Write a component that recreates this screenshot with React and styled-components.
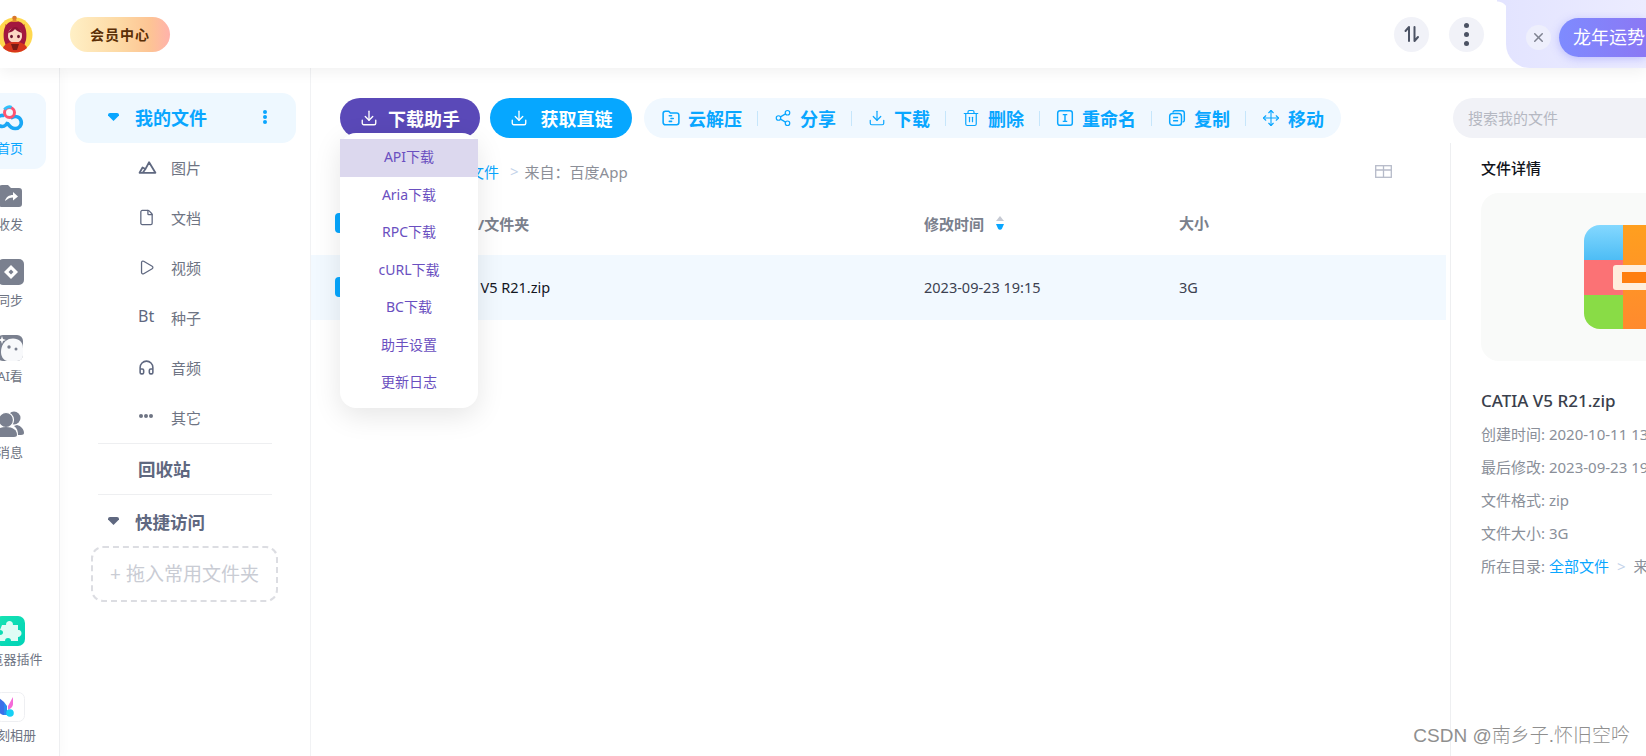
import React from 'react';
import styled, { createGlobalStyle } from 'styled-components';
import { Download, Share2, Trash2, Move, File, Play, Headphones, X } from 'lucide-react';

const helperMenu = ['API下载', 'Aria下载', 'RPC下载', 'cURL下载', 'BC下载', '助手设置', '更新日志'];

const details = [
  ['创建时间:', '2020-10-11 13:24:08'],
  ['最后修改:', '2023-09-23 19:15:32'],
  ['文件格式:', 'zip'],
  ['文件大小:', '3G'],
];

export default function App() {
  return (
    <Page>
      <GlobalStyle />
      <Header>
        <Avatar />
        <VipPill>会员中心</VipPill>
        <HeaderRight>
          <RoundButton><SortIcon /></RoundButton>
          <RoundButton><VerticalDots $color="#4c5364" $size={5} $gap={4} /></RoundButton>
        </HeaderRight>
        <Promo>
          <PromoClose><X size={15} strokeWidth={2.4} /></PromoClose>
          <PromoButton>龙年运势</PromoButton>
        </Promo>
      </Header>

      <Body>
        <Rail>
          {railTop.map((item) => (
            <RailItem key={item.label} $active={item.active}>
              <RailIcon>{item.icon}</RailIcon>
              {item.label}
            </RailItem>
          ))}
          <RailSpacer />
          <RailItem>
            <RailIcon><PluginIcon /></RailIcon>
            浏览器插件
          </RailItem>
          <RailItem>
            <RailIcon><AlbumIcon /></RailIcon>
            一刻相册
          </RailItem>
        </Rail>

        <Sidebar>
          <MyFiles>
            <Caret $color="#09a6ff" />
            <MyFilesLabel>我的文件</MyFilesLabel>
            <VerticalDots $color="#09a6ff" $size={4} $gap={1} />
          </MyFiles>
          {fileTypes.map((t) => (
            <TypeRow key={t.label}>
              <TypeIcon>{t.icon}</TypeIcon>
              {t.label}
            </TypeRow>
          ))}
          <SideDivider />
          <RecycleRow>回收站</RecycleRow>
          <SideDivider />
          <QuickRow>
            <Caret $color="#5f6880" />
            快捷访问
          </QuickRow>
          <DropBox>+ 拖入常用文件夹</DropBox>
        </Sidebar>

        <Main>
          <TopBar>
            <HelperWrap>
              <PrimaryButton $bg="#5a49b8" $width={140} $gap={10}>
                <Download size={18} strokeWidth={1.8} />
                下载助手
              </PrimaryButton>
              <HelperMenu>
                {helperMenu.map((m, i) => (
                  <HelperItem key={m} $active={i === 0}>{m}</HelperItem>
                ))}
              </HelperMenu>
            </HelperWrap>
            <PrimaryButton $bg="#06a7ff" $width={142} $gap={13}>
              <Download size={18} strokeWidth={1.8} />
              获取直链
            </PrimaryButton>
            <ActionBar>
              {actions.map((a, i) => (
                <React.Fragment key={a.label}>
                  {i > 0 && <ActionSep />}
                  <Action>{a.icon}{a.label}</Action>
                </React.Fragment>
              ))}
            </ActionBar>
            <Search>搜索我的文件</Search>
          </TopBar>

          <Content>
            <Files>
              <Crumbs>
                <CrumbLink>全部文件</CrumbLink>
                <CrumbArrow>&gt;</CrumbArrow>
                来自：百度App
                <ViewToggle />
              </Crumbs>
              <TableHead>
                <NameCell><CheckBox /><HeadName>文件名/文件夹</HeadName></NameCell>
                <TimeCell>
                  <HeadText>修改时间</HeadText>
                  <SortArrows />
                </TimeCell>
                <SizeCell><HeadText>大小</HeadText></SizeCell>
              </TableHead>
              <TableRow>
                <NameCell><CheckBox /><FileName>CATIA V5 R21.zip</FileName></NameCell>
                <TimeCell>2023-09-23 19:15</TimeCell>
                <SizeCell>3G</SizeCell>
              </TableRow>
            </Files>

            <Details>
              <DetailsTitle>文件详情</DetailsTitle>
              <Preview><ZipArt /></Preview>
              <DetailName>CATIA V5 R21.zip</DetailName>
              {details.map(([k, v]) => (
                <DetailLine key={k}>{k} {v}</DetailLine>
              ))}
              <DetailLine>
                所在目录: <CrumbLink>全部文件</CrumbLink><DetailArrow>&gt;</DetailArrow>来自：百度App
              </DetailLine>
            </Details>
          </Content>
        </Main>
      </Body>
      <Watermark>CSDN @南乡子.怀旧空吟</Watermark>
    </Page>
  );
}

function Avatar() {
  return (
    <AvatarSvg viewBox="0 0 36 38" width="36" height="38">
      <circle cx="18" cy="20" r="17.5" fill="#ffd84f" />
      <path d="M8 9l4 2-3 5zM28 9l-4 2 3 5z" fill="#d9772b" />
      <path d="M7 25C5 11 11 6 18 6s13 5 11 19l-2 6H9z" fill="#a3173f" />
      <circle cx="17.500" cy="3" r="2.300" fill="#d9772b" />
      <path d="M13.500 7l4-3 4 3z" fill="#e0872f" />
      <path d="M11 21c0-6 3-8 7-8s7 2 7 8c0 4-3 7-7 7s-7-3-7-7z" fill="#fbd6c4" />
      <path d="M11 18c2-4 5-6 7-6s6 2 7 6c-4-1-6-3-7-4-1 2-4 3-7 4z" fill="#8e1236" />
      <ellipse cx="14.500" cy="21.500" rx="1.400" ry="1.800" fill="#6b1530" />
      <ellipse cx="21.500" cy="21.500" rx="1.400" ry="1.800" fill="#6b1530" />
      <path d="M6 33c2-5 7-6 12-6s10 1 12 6c-3 3-8 4.500-12 4.500S9 36 6 33z" fill="#d8361d" />
      <path d="M14 29h8l-2 6h-4z" fill="#7a1a14" />
    </AvatarSvg>
  );
}

function HomeLogo() {
  return (
    <svg viewBox="0 0 30 30" width="30" height="30" fill="none">
      <path d="M12 18.500a5.500 5.500 0 1 1-4-8" stroke="#1aa7f5" strokeWidth="3.600" strokeLinecap="round" />
      <path d="M13 19c2 3 4 4.500 7 4.500a6 6 0 1 0-3-11" stroke="#1aa7f5" strokeWidth="3.600" strokeLinecap="round" />
      <circle cx="14.500" cy="7.500" r="5" stroke="#ff5470" strokeWidth="3" />
      <path d="M9.500 4.500a5.500 5.500 0 0 1 7-2.200" stroke="#2fc1fb" strokeWidth="3" />
    </svg>
  );
}

function ShareFolder() {
  return (
    <svg viewBox="0 0 30 30" width="30" height="30">
      <path d="M4 7a3 3 0 0 1 3-3h6l3 3h8a3 3 0 0 1 3 3v13a3 3 0 0 1-3 3H7a3 3 0 0 1-3-3z" fill="#7a808f" />
      <path d="M10 20c1-4 4-6 8-6v-3l5 4.500-5 4v-3c-3 0-5 1-8 3.500z" fill="#fff" />
    </svg>
  );
}

function SyncIcon() {
  return (
    <svg viewBox="0 0 30 30" width="30" height="30">
      <rect x="3" y="2" width="26" height="26" rx="5" fill="#7a808f" />
      <path d="M16 8l7 7-7 7-7-7z" fill="#fff" />
      <path d="M16 12.500l2.500 2.500-2.500 2.500-2.500-2.500z" fill="#7a808f" />
    </svg>
  );
}

function AiIcon() {
  return (
    <svg viewBox="0 0 30 30" width="30" height="30">
      <rect x="2" y="2" width="26" height="26" rx="6" fill="#7a808f" />
      <path d="M14 6c8-2 14 2 14 9v7c0 3-2 6-6 6H12c-4-1-6-5-6-9 0-6 3-11 8-13z" fill="#f8f9fb" />
      <path d="M7 3l1 3 3 1-3 1-1 3-1-3-3-1 3-1z" fill="#fff" />
      <circle cx="14" cy="14" r="1.700" fill="#7a808f" />
      <circle cx="21" cy="16" r="1.500" fill="#7a808f" />
    </svg>
  );
}

function PeopleIcon() {
  return (
    <svg viewBox="0 0 30 30" width="30" height="30">
      <circle cx="19" cy="9" r="6.500" fill="#7a808f" />
      <path d="M22 16c4 1 7 4 7 8 0 1-1 2-3 2h-3c0-4-1-7-4-9z" fill="#7a808f" />
      <circle cx="11" cy="11" r="7.500" fill="#7a808f" stroke="#fff" strokeWidth="1.200" />
      <path d="M0 26c0-5 4-8 11-8s11 3 11 8c0 1-1 2-3 2H3c-2 0-3-1-3-2z" fill="#7a808f" />
    </svg>
  );
}

function PluginIcon() {
  return (
    <svg viewBox="0 0 30 30" width="30" height="30">
      <defs>
        <linearGradient id="plug" x1="0" y1="0" x2="1" y2="1">
          <stop offset="0" stopColor="#18e3b1" />
          <stop offset="1" stopColor="#00d3b8" />
        </linearGradient>
      </defs>
      <rect x="0" y="0" width="30" height="30" rx="7" fill="url(#plug)" />
      <path d="M7 9h4c0-3 1.500-4 3.500-4S18 6 18 9h5v5c3 0 3.500 2 3.500 3.500S25 21 23 21v4H16c0-2-1-3-3-3s-3 1-3 3H5v-6c2 0 3-1 3-2.500S7 14 5 14z" fill="#dffcf5" />
    </svg>
  );
}

function AlbumIcon() {
  return (
    <svg viewBox="0 0 30 30" width="30" height="30">
      <rect x="0.500" y="0.500" width="29" height="29" rx="6" fill="#fff" stroke="#eeeff2" />
      <path d="M3 5l6 5v13c-3 0-6-3-6-7z" fill="#3b6fe8" />
      <path d="M9 10l3 4v9l-3 0z" fill="#2a8bf0" />
      <path d="M18 5v7c0 3-3 5-5 6v-4z" fill="#f56ad8" />
      <circle cx="15" cy="21" r="3.800" fill="#16d0f5" />
    </svg>
  );
}

function MountainIcon() {
  return (
    <svg viewBox="0 0 18 18" width="19" height="19" fill="none" stroke="currentColor" strokeWidth="1.700" strokeLinejoin="round">
      <path d="M1.500 14l2.800-5 2.700 1.500L10.500 4l6 10z" />
      <path d="M4.500 14l2.500-3.500" />
    </svg>
  );
}

function ZipFolderIcon() {
  return (
    <svg viewBox="0 0 16 16" width="18" height="18" fill="none" stroke="currentColor" strokeWidth="1.400">
      <path d="M1 4a2 2 0 0 1 2-2h3l1.500 1.500H13a2 2 0 0 1 2 2V12a2 2 0 0 1-2 2H3a2 2 0 0 1-2-2z" />
      <path d="M6.500 6h2M8 8.500h2M6.500 11h2" strokeLinecap="round" />
    </svg>
  );
}

function RenameIcon() {
  return (
    <svg viewBox="0 0 16 16" width="18" height="18" fill="none" stroke="currentColor" strokeWidth="1.300">
      <rect x="1.500" y="1.500" width="13" height="13" rx="2" />
      <path d="M6 5h4M8 5v6M6 11h4" />
    </svg>
  );
}

function CopyIcon() {
  return (
    <svg viewBox="0 0 16 16" width="18" height="18" fill="none" stroke="currentColor" strokeWidth="1.300">
      <path d="M4.500 3V3a1.500 1.500 0 0 1 1.500-1.500h6.500A2 2 0 0 1 14.500 3.500V10a1.500 1.500 0 0 1-1.500 1.500" />
      <rect x="1.500" y="4" width="10.500" height="10.500" rx="2.500" />
      <path d="M4.500 7.500h4.500M4.500 10.500h4.500" />
    </svg>
  );
}

function SortIcon() {
  return (
    <svg viewBox="0 0 20 20" width="20" height="20" fill="none" stroke="#4c5364" strokeWidth="2" strokeLinecap="round" strokeLinejoin="round">
      <path d="M7 17V3L3.500 7" />
      <path d="M12.500 3v14l3.500-4" />
    </svg>
  );
}

function ViewToggle() {
  return (
    <ViewSvg viewBox="0 0 17 13" width="17" height="13" fill="none" stroke="#b6bbc9" strokeWidth="1.300">
      <rect x="0.700" y="0.700" width="15.600" height="11.600" />
      <path d="M0.700 5h15.600M8.500 0.700v11.600" />
    </ViewSvg>
  );
}

function SortArrows() {
  return (
    <svg viewBox="0 0 10 14" width="10" height="14">
      <path d="M5 0l4 5H1z" fill="#c5c9d3" />
      <path d="M1 8h8l-2 4.500a2.200 2.200 0 0 1-4 0z" fill="#09a6ff" />
    </svg>
  );
}

function ZipArt() {
  return (
    <ZipSvg viewBox="0 0 104 104" width="104" height="104">
      <defs>
        <linearGradient id="zipBlue" x1="0" y1="0" x2="0" y2="1">
          <stop offset="0" stopColor="#84d8ff" />
          <stop offset="1" stopColor="#4dbdf5" />
        </linearGradient>
        <linearGradient id="zipOrange" x1="0" y1="0" x2="0" y2="1">
          <stop offset="0" stopColor="#ff9f1f" />
          <stop offset="1" stopColor="#ff8a2e" />
        </linearGradient>
        <clipPath id="zipClip"><rect width="104" height="104" rx="16" /></clipPath>
      </defs>
      <g clipPath="url(#zipClip)">
        <rect width="39" height="35" fill="url(#zipBlue)" />
        <rect y="35" width="39" height="35" fill="#fb7275" />
        <rect y="70" width="39" height="34" fill="#89dc46" />
        <rect x="39" width="65" height="104" fill="url(#zipOrange)" />
        <rect x="29" y="40" width="52" height="25" rx="3" fill="#ffeedd" />
        <rect x="38" y="47" width="40" height="11" fill="#ff7f10" />
      </g>
    </ZipSvg>
  );
}

const GlobalStyle = createGlobalStyle`
  html, body {
    margin: 0;
    padding: 0;
    background: #fff;
    overflow: hidden;
  }
  * {
    box-sizing: border-box;
  }
`;

const Page = styled.div`
  position: relative;
  width: 1646px;
  height: 756px;
  overflow: hidden;
  font-family: "Noto Sans", "Noto Sans CJK SC", sans-serif;
`;

const Header = styled.header`
  position: relative;
  z-index: 2;
  display: flex;
  align-items: center;
  height: 68px;
  background: #fff;
  box-shadow: 0 4px 14px rgba(0, 0, 0, 0.06);
`;

const AvatarSvg = styled.svg`
  flex: none;
  margin-left: -3px;
`;

const VipPill = styled.div`
  display: flex;
  align-items: center;
  justify-content: center;
  width: 100px;
  height: 35px;
  margin-left: 37px;
  border-radius: 18px;
  background: linear-gradient(90deg, #fff0c6 0%, #fdd9a4 50%, #fdc494 80%, #ffb2ab 100%);
  color: #5a2e05;
  font-size: 14px;
  font-weight: 700;
  letter-spacing: 1px;
`;

const HeaderRight = styled.div`
  display: flex;
  gap: 20px;
  margin-left: auto;
  margin-right: 22px;
`;

const RoundButton = styled.div`
  display: flex;
  align-items: center;
  justify-content: center;
  width: 35px;
  height: 35px;
  border-radius: 50%;
  background: #f1f2f8;
`;

const VerticalDots = styled.span`
  width: ${(p) => p.$size}px;
  height: ${(p) => p.$size}px;
  border-radius: 50%;
  background: ${(p) => p.$color};
  box-shadow: 0 ${(p) => p.$size + p.$gap}px 0 ${(p) => p.$color}, 0 -${(p) => p.$size + p.$gap}px 0 ${(p) => p.$color};
`;

const Promo = styled.div`
  position: relative;
  display: flex;
  align-items: center;
  flex: none;
  width: 140px;
  height: 68px;
  padding: 6px 0 0 20px;
  border-radius: 0 0 0 24px;
  background: linear-gradient(90deg, #e3e4ff, #ececff);

  &:before {
    content: "";
    position: absolute;
    top: 0;
    left: -9px;
    width: 9px;
    height: 13px;
    background: radial-gradient(circle at 0 100%, transparent 11px, #e3e4ff 12px);
  }
`;

const PromoClose = styled.div`
  display: flex;
  flex: none;
  align-items: center;
  justify-content: center;
  width: 25px;
  height: 25px;
  border-radius: 50%;
  background: #eeeffc;
  color: #7f8290;
`;

const PromoButton = styled.div`
  flex: none;
  width: 87px;
  height: 39px;
  margin-left: 8px;
  padding-left: 14px;
  border-radius: 20px 0 0 20px;
  background: linear-gradient(90deg, #7e8bff, #8b78f4);
  box-shadow: 0 2px 10px rgba(110, 110, 250, 0.35);
  color: #fff;
  font-size: 18px;
  line-height: 39px;
  white-space: nowrap;
`;

const Body = styled.div`
  display: flex;
  height: 688px;
`;

const Rail = styled.nav`
  display: flex;
  flex: none;
  flex-direction: column;
  align-items: flex-end;
  width: 60px;
  padding: 25px 13px 0 0;
  overflow: hidden;
  border-right: 1px solid #eeeff1;
  box-shadow: 4px 0 10px rgba(0, 0, 0, 0.02);
`;

const RailItem = styled.div`
  display: flex;
  flex: none;
  flex-direction: column;
  align-items: center;
  width: 72px;
  height: 76px;
  padding-top: 12px;
  border-radius: 12px;
  background: ${(p) => (p.$active ? '#f0f8ff' : 'transparent')};
  color: ${(p) => (p.$active ? '#09a6ff' : '#6e7483')};
  font-size: 13px;
  line-height: 18px;
  white-space: nowrap;
`;

const RailIcon = styled.div`
  display: flex;
  justify-content: center;
  height: 31px;
  margin-bottom: 3px;
`;

const RailSpacer = styled.div`
  flex: 1;
`;

const Sidebar = styled.aside`
  flex: none;
  width: 250px;
  padding-top: 25px;
`;

const MyFiles = styled.div`
  display: flex;
  align-items: center;
  width: 221px;
  height: 50px;
  margin-left: 15px;
  padding: 0 29px 2px 33px;
  border-radius: 14px;
  background: #eef8ff;
`;

const Caret = styled.span`
  flex: none;
  width: 11px;
  height: 8px;
  margin-right: 16px;
  background: ${(p) => p.$color};
  clip-path: polygon(0 0, 100% 0, 100% 30%, 50% 100%, 0 30%);
  border-radius: 2px;
`;

const MyFilesLabel = styled.span`
  flex: 1;
  color: #09a6ff;
  font-size: 18px;
  font-weight: 700;
`;

const TypeRow = styled.div`
  display: flex;
  align-items: center;
  height: 50px;
  padding: 0 0 2px 78px;
  color: #6e7483;
  font-size: 15px;
`;

const TypeIcon = styled.div`
  display: flex;
  align-items: center;
  width: 33px;
  color: #5f6880;
`;

const BtMark = styled.span`
  font-size: 16px;
  font-weight: 400;
  margin-top: -2px;
`;

const DotsMark = styled.span`
  width: 4px;
  height: 4px;
  margin: -2px 0 0 1px;
  border-radius: 50%;
  background: #6e7483;
  box-shadow: 5px 0 0 #6e7483, 10px 0 0 #6e7483;
`;

const SideDivider = styled.div`
  width: 174px;
  height: 1px;
  margin-left: 38px;
  background: #eeeff1;
`;

const RecycleRow = styled.div`
  display: flex;
  align-items: center;
  height: 50px;
  padding: 0 0 2px 78px;
  color: #5f6880;
  font-size: 17.5px;
  font-weight: 700;
`;

const QuickRow = styled.div`
  display: flex;
  align-items: center;
  height: 50px;
  padding: 2px 0 0 48px;
  color: #5f6880;
  font-size: 17.5px;
  font-weight: 700;
`;

const DropBox = styled.div`
  display: flex;
  align-items: center;
  justify-content: center;
  width: 187px;
  height: 56px;
  margin: 1px 0 0 31px;
  padding-bottom: 2px;
  border: 2px dashed #dcdde2;
  border-radius: 12px;
  color: #c9ccd4;
  font-size: 19px;
`;

const Main = styled.main`
  flex: 1;
  min-width: 0;
  overflow: hidden;
  border-left: 1px solid #f1f2f4;
`;

const TopBar = styled.div`
  display: flex;
  height: 40px;
  margin-top: 30px;
  padding-left: 29px;
`;

const HelperWrap = styled.div`
  position: relative;
  flex: none;
`;

const PrimaryButton = styled.div`
  display: flex;
  align-items: center;
  justify-content: center;
  gap: ${(p) => p.$gap}px;
  flex: none;
  width: ${(p) => p.$width}px;
  height: 40px;
  margin-right: 10px;
  border-radius: 20px;
  background: ${(p) => p.$bg};
  color: #fff;
  font-size: 18px;
  font-weight: 700;
`;

const HelperMenu = styled.div`
  position: absolute;
  z-index: 3;
  top: 35px;
  left: 0;
  width: 138px;
  height: 275px;
  padding-top: 6px;
  border-radius: 16px;
  background: #fff;
  box-shadow: 0 8px 28px rgba(0, 0, 0, 0.1);
`;

const HelperItem = styled.div`
  height: 37.5px;
  background: ${(p) => (p.$active ? '#dcd8ee' : 'transparent')};
  color: #6a4fc0;
  font-size: 14px;
  line-height: 36px;
  text-align: center;
`;

const ActionBar = styled.div`
  display: flex;
  flex: none;
  align-items: center;
  width: 697px;
  height: 40px;
  margin-left: 2px;
  padding-left: 18px;
  border-radius: 20px;
  background: #f0f8ff;
`;

const Action = styled.div`
  display: flex;
  align-items: center;
  gap: 8px;
  color: #09a6ff;
  font-size: 18px;
  font-weight: 700;
`;

const ActionSep = styled.span`
  width: 1px;
  height: 15px;
  margin: 0 16px 0 15px;
  background: #c6e6fb;
`;

const Search = styled.div`
  flex: 1;
  height: 40px;
  margin-left: 112px;
  padding-left: 15px;
  border-radius: 20px 0 0 20px;
  background: #f1f2f7;
  color: #b5b8c2;
  font-size: 15px;
  line-height: 40px;
  white-space: nowrap;
`;

const Content = styled.div`
  display: flex;
  height: 615px;
  margin-top: 5px;
`;

const Files = styled.section`
  flex: none;
  width: 1135px;
  margin-right: 4px;
`;

const Crumbs = styled.div`
  display: flex;
  align-items: center;
  height: 48px;
  padding: 8px 0 0 128px;
  color: #8c8f98;
  font-size: 15px;
`;

const CrumbLink = styled.span`
  color: #09a6ff;
`;

const CrumbArrow = styled.span`
  margin: 0 6px 0 11px;
  color: #c3d3ea;
`;

const ViewSvg = styled.svg`
  margin-left: auto;
  margin-right: 54px;
`;

const TableHead = styled.div`
  display: flex;
  align-items: center;
  height: 64px;
`;

const TableRow = styled.div`
  display: flex;
  align-items: center;
  height: 65px;
  padding-bottom: 2px;
  background: #f2f9ff;
  color: #3c4150;
  font-size: 14.5px;
`;

const NameCell = styled.div`
  display: flex;
  align-items: center;
  flex: none;
  width: 613px;
  padding-left: 24px;
`;

const CheckBox = styled.span`
  flex: none;
  width: 20px;
  height: 20px;
  border-radius: 4px;
  background: #06a7ff;
`;

const HeadText = styled.span`
  color: #7a808c;
  font-size: 15px;
  font-weight: 700;
`;

const HeadName = styled(HeadText)`
  margin-left: 78px;
`;

const FileName = styled.span`
  margin-left: 82px;
  color: #14171f;
  font-size: 14.5px;
  white-space: nowrap;
`;

const TimeCell = styled.div`
  display: flex;
  align-items: center;
  gap: 11px;
  flex: none;
  width: 255px;
`;

const SizeCell = styled.div`
  flex: none;
`;

const Details = styled.section`
  flex: none;
  width: 420px;
  padding-left: 30px;
  border-left: 1px solid #eeeff1;
`;

const DetailsTitle = styled.div`
  height: 50px;
  padding-top: 14px;
  color: #10131a;
  font-size: 15px;
  font-weight: 500;
`;

const Preview = styled.div`
  display: flex;
  align-items: center;
  height: 168px;
  padding-left: 103px;
  border-radius: 18px;
  background: #f9faf9;
`;

const ZipSvg = styled.svg`
  flex: none;
`;

const DetailName = styled.div`
  margin: 28px 0 5px;
  color: #3a3f4c;
  font-size: 17px;
  font-weight: 500;
  line-height: 24px;
  white-space: nowrap;
`;

const DetailLine = styled.div`
  height: 33px;
  color: #8a8f99;
  font-size: 15px;
  line-height: 33px;
  white-space: nowrap;
`;

const DetailArrow = styled.span`
  margin: 0 8px;
  color: #c3d3ea;
`;

const Watermark = styled.div`
  position: absolute;
  z-index: 4;
  right: 16px;
  bottom: 7px;
  color: #8f8f8f;
  font-family: "Liberation Sans", "Noto Sans CJK SC", sans-serif;
  font-size: 19px;
  font-weight: 300;
  line-height: 26px;
  white-space: nowrap;
`;

const railTop = [
  { label: '首页', icon: <HomeLogo />, active: true },
  { label: '收发', icon: <ShareFolder /> },
  { label: '同步', icon: <SyncIcon /> },
  { label: 'AI看', icon: <AiIcon /> },
  { label: '消息', icon: <PeopleIcon /> },
];

const fileTypes = [
  { label: '图片', icon: <MountainIcon /> },
  { label: '文档', icon: <File size={17} strokeWidth={1.8} /> },
  { label: '视频', icon: <Play size={17} strokeWidth={1.8} /> },
  { label: '种子', icon: <BtMark>Bt</BtMark> },
  { label: '音频', icon: <Headphones size={17} strokeWidth={2.2} /> },
  { label: '其它', icon: <DotsMark /> },
];

const actions = [
  { label: '云解压', icon: <ZipFolderIcon /> },
  { label: '分享', icon: <Share2 size={18} strokeWidth={1.6} /> },
  { label: '下载', icon: <Download size={18} strokeWidth={1.6} /> },
  { label: '删除', icon: <Trash2 size={18} strokeWidth={1.6} /> },
  { label: '重命名', icon: <RenameIcon /> },
  { label: '复制', icon: <CopyIcon /> },
  { label: '移动', icon: <Move size={18} strokeWidth={1.5} /> },
];
